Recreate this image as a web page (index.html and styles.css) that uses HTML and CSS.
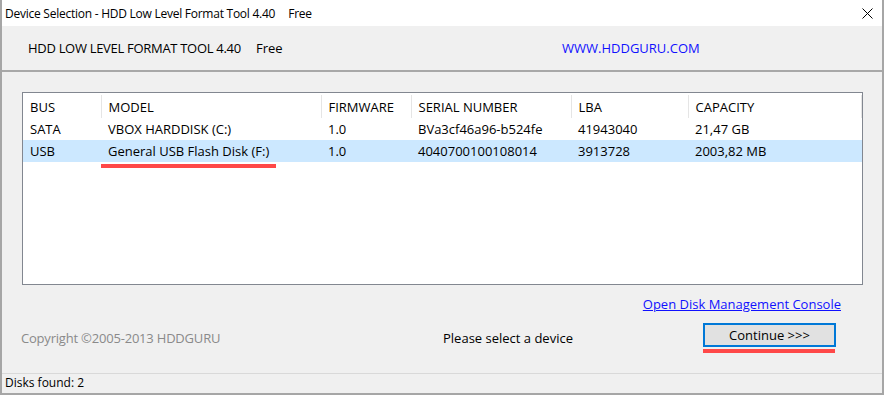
FILE: index.html
```html
<!DOCTYPE html>
<html>
<head>
    <title>Device Selection - HDD Low Level Format Tool 4.40</title>
    <link rel="stylesheet" href="styles.css">
</head>
<body>
    <div class="window">
        <div class="titlebar">
            <span class="title">Device Selection - HDD Low Level Format Tool 4.40<span class="title-free">Free</span></span>
            <svg class="close" width="11" height="11" viewBox="0 0 11 11">
                <path d="M0.5 0.5 L10.5 10.5 M10.5 0.5 L0.5 10.5" stroke="#000" stroke-width="1" fill="none"/>
            </svg>
        </div>

        <div class="banner">
            <span class="product">HDD LOW LEVEL FORMAT TOOL 4.40</span>
            <span class="edition">Free</span>
            <a href="#" class="site">WWW.HDDGURU.COM</a>
        </div>

        <div class="content">
            <div class="listbox">
                <table class="devices">
                    <thead>
                        <tr>
                            <th class="col-bus">BUS</th>
                            <th class="col-model">MODEL</th>
                            <th class="col-fw">FIRMWARE</th>
                            <th class="col-serial">SERIAL NUMBER</th>
                            <th class="col-lba">LBA</th>
                            <th class="col-cap">CAPACITY</th>
                        </tr>
                    </thead>
                    <tbody>
                        <tr>
                            <td>SATA</td>
                            <td>VBOX HARDDISK (C:)</td>
                            <td>1.0</td>
                            <td>BVa3cf46a96-b524fe</td>
                            <td>41943040</td>
                            <td>21,47 GB</td>
                        </tr>
                        <tr class="selected">
                            <td>USB</td>
                            <td class="marked">General USB Flash Disk (F:)</td>
                            <td>1.0</td>
                            <td>4040700100108014</td>
                            <td>3913728</td>
                            <td>2003,82 MB</td>
                        </tr>
                    </tbody>
                </table>
            </div>

            <div class="links">
                <a href="#" class="console-link">Open Disk Management Console</a>
            </div>

            <div class="actions">
                <span class="copyright">Copyright ©2005-2013 HDDGURU</span>
                <span class="hint">Please select a device</span>
                <div class="continue-wrap">
                    <button class="continue">Continue &gt;&gt;&gt;</button>
                    <div class="mark-bar"></div>
                </div>
            </div>
        </div>

        <div class="statusbar">Disks found: 2</div>
    </div>
</body>
</html>
```

FILE: styles.css
```css
* {
    margin: 0;
    padding: 0;
    box-sizing: border-box;
}

body {
    font-family: 'Open Sans', 'Noto Sans', sans-serif;
    font-size: 13px;
    color: #000;
    background: #fff;
}

.window {
    width: 884px;
    height: 395px;
    display: flex;
    flex-direction: column;
    background: #f0f0f0;
    border: 2px solid #a6a6a6;
    border-top: none;
}

/* title bar */
.titlebar {
    height: 26px;
    background: #fff;
    display: flex;
    align-items: center;
    justify-content: space-between;
    padding: 0 9px 0 3px;
}

.title {
    font-size: 12px;
    letter-spacing: -0.25px;
}

.title-free {
    margin-left: 13px;
}

.close {
    display: block;
}

/* banner */
.banner {
    height: 46px;
    display: grid;
    grid-template-columns: 228px 306px 1fr;
    align-items: center;
    padding-left: 26px;
    border-bottom: 2px solid #a8a8a8;
}

.product {
    letter-spacing: -0.3px;
}

.site {
    color: #1010ff;
    text-decoration: none;
}

/* main area */
.content {
    flex: 1;
    display: flex;
    flex-direction: column;
    padding: 20px 19px 0 20px;
}

.listbox {
    height: 193px;
    background: #fff;
    border: 1px solid #828790;
    padding-top: 2px;
}

.devices {
    width: 100%;
    border-collapse: collapse;
    table-layout: fixed;
}

.devices th,
.devices td {
    text-align: left;
    font-weight: normal;
    padding-left: 7px;
    white-space: nowrap;
}

.devices th {
    height: 23px;
    border-right: 1px solid #e5e5e5;
}

.devices td {
    height: 22px;
}

.col-bus { width: 78px; }
.col-model { width: 220px; }
.col-fw { width: 90px; }
.col-serial { width: 160px; }
.col-lba { width: 117px; }

.selected td {
    background: #cce8ff;
}

.marked {
    position: relative;
}

.marked::after {
    content: "";
    position: absolute;
    left: 0;
    top: calc(100% + 2px);
    width: 175px;
    height: 4px;
    background: #ff4848;
}

.links {
    display: flex;
    justify-content: flex-end;
    padding: 10px 22px 0 0;
    line-height: 18px;
}

.console-link {
    color: #1010ff;
}

.actions {
    display: grid;
    grid-template-columns: 422px 260px 133px;
    align-items: start;
    margin-top: 10px;
    margin-left: -1px;
}

.copyright,
.hint {
    line-height: 18px;
    margin-top: 6px;
}

.copyright {
    color: #8a8a8a;
    letter-spacing: -0.2px;
}

.continue {
    width: 133px;
    height: 24px;
    font-family: inherit;
    font-size: 13px;
    color: #000;
    background: #e1e1e1;
    border: 2px solid #0078d7;
}

.mark-bar {
    height: 4px;
    margin-top: 2px;
    margin-right: 1px;
    background: #ff4848;
}

/* status bar */
.statusbar {
    height: 20px;
    border-top: 1px solid #d9d9d9;
    padding-left: 3px;
    font-size: 12px;
    line-height: 18px;
}
```
